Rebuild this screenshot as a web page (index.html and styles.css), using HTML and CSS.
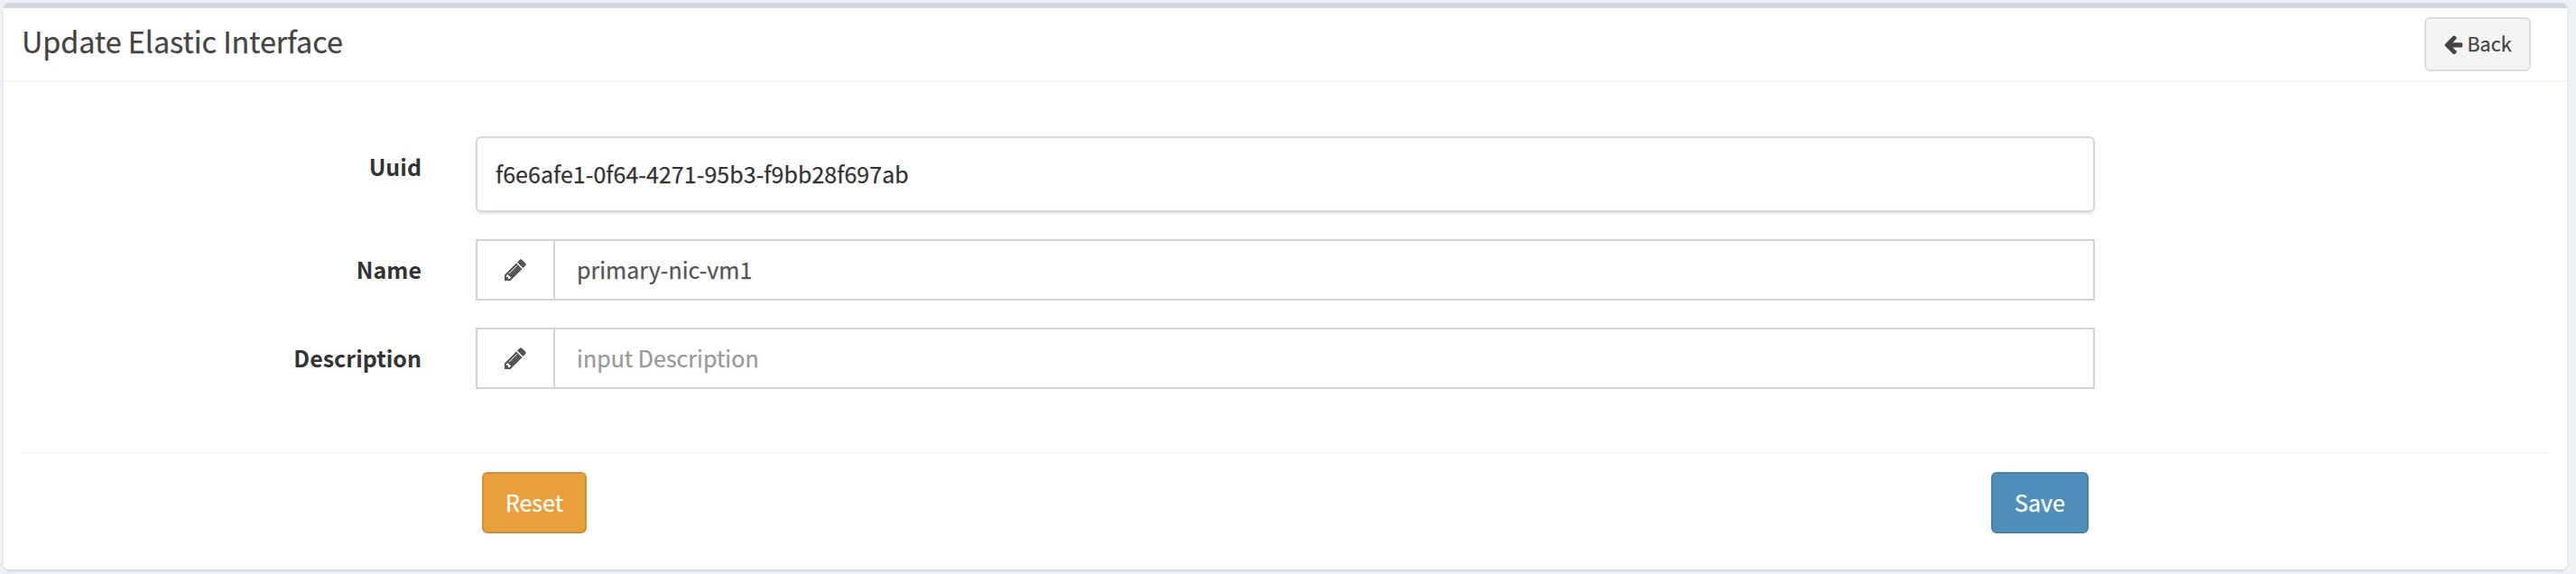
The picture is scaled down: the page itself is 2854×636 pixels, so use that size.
FILE: index.html
```html
<!DOCTYPE html>
<html lang="en">
<head>
<meta charset="utf-8">
<title>Update Elastic Interface</title>
<link rel="stylesheet" href="styles.css">
</head>
<body>
<svg class="sprite" aria-hidden="true">
  <symbol id="pencil" viewBox="0 0 1792 1792"><path d="M491 1536l91-91-235-235-91 91v107h128v128h107zm523-928q0-22-22-22-10 0-17 7l-542 542q-7 7-7 17 0 22 22 22 10 0 17-7l542-542q7-7 7-17zm-54-192l416 416-832 832h-416v-416zm683 96q0 53-37 90l-166 166-416-416 166-165q36-38 90-38 53 0 91 38l235 234q37 39 37 91z"/></symbol>
</svg>
<main class="box">
  <header class="box-header">
    <h3 class="box-title">Update Elastic Interface</h3>
    <a class="btn btn-back"><svg class="icon-back" viewBox="0 0 1792 1792"><path d="M1664 896v128q0 53-32.5 90.5t-84.5 37.5h-704l293 294q38 36 38 90t-38 90l-75 76q-37 37-90 37-52 0-91-37l-651-652q-37-37-37-90 0-52 37-91l651-650q38-38 91-38 52 0 90 38l75 74q38 38 38 91t-38 91l-293 293h704q52 0 84.5 37.5t32.5 90.5z"/></svg><span>Back</span></a>
  </header>
  <form class="box-body">
    <div class="form-group">
      <label class="label label-top"><span class="t">Uuid</span></label>
      <div class="static"><span class="t uuid">f6e6afe1-0f64-4271-95b3-f9bb28f697ab</span></div>
    </div>
    <div class="form-group">
      <label class="label"><span class="t">Name</span></label>
      <div class="input-group">
        <span class="addon"><svg class="icon-pencil"><use href="#pencil"/></svg></span>
        <div class="field"><span class="t">primary-nic-vm1</span></div>
      </div>
    </div>
    <div class="form-group">
      <label class="label"><span class="t">Description</span></label>
      <div class="input-group">
        <span class="addon"><svg class="icon-pencil"><use href="#pencil"/></svg></span>
        <div class="field placeholder"><span class="t">input Description</span></div>
      </div>
    </div>
  </form>
  <footer class="box-footer">
    <a class="btn btn-reset"><span class="t">Reset</span></a>
    <a class="btn btn-save"><span class="t">Save</span></a>
  </footer>
</main>
</body>
</html>
```

FILE: styles.css
```css
* {
  box-sizing: border-box;
}

body {
  margin: 0;
  height: 636px;
  padding: 3px 10px 5px 4px;
  overflow: hidden;
  background: #ecf0f5;
  color: #333;
  font: 25px/40px "Noto Sans CJK SC", sans-serif;
  -webkit-text-stroke: 0.25px;
}

.sprite {
  display: none;
}

.box {
  height: 628px;
  display: flex;
  flex-direction: column;
  background: #fff;
  border-top: 6px solid #d2d6de;
  border-radius: 6px;
  box-shadow: 0 2px 2px rgba(0, 0, 0, 0.1);
}

.box-header {
  height: 82px;
  display: flex;
  align-items: center;
  justify-content: space-between;
  padding: 0 40px 0 20px;
  border-bottom: 2px solid #f4f4f4;
  color: #444;
}

.box-title {
  margin: 0;
  padding-bottom: 9px;
  font-size: 32.4px;
  font-weight: 400;
  letter-spacing: -0.06px;
}

.btn {
  display: flex;
  align-items: center;
  justify-content: center;
  height: 68px;
  border: 2px solid;
  border-radius: 6px;
  color: #fff;
  white-space: nowrap;
}

.btn-back {
  width: 118px;
  height: 60px;
  gap: 3px;
  padding-right: 1px;
  font-size: 21.5px;
  background: #f4f4f4;
  border-color: #ddd;
  color: #444;
}

.btn-back span {
  padding-bottom: 3px;
}

.icon-back {
  width: 24px;
  height: 24px;
  fill: #444;
}

.box-body {
  flex: 1;
  display: flex;
  flex-direction: column;
  gap: 30px;
  padding: 60px 20px 0;
}

.form-group {
  display: grid;
  grid-template-columns: 443px 1794px;
  column-gap: 60px;
}

.label {
  display: flex;
  align-items: center;
  justify-content: flex-end;
  font-weight: 700;
  -webkit-text-stroke: 0;
}

.label-top {
  height: 68px;
}

.t {
  padding-bottom: 2px;
}

.uuid {
  letter-spacing: 0.04px;
}

.static {
  height: 84px;
  display: flex;
  align-items: center;
  padding-left: 20px;
  border: 2px solid #d2d6de;
  border-radius: 6px;
  box-shadow: 0 2px 2px rgba(0, 0, 0, 0.1);
}

.input-group {
  height: 68px;
  display: flex;
  border: 2px solid #d2d3d8;
}

.addon {
  width: 86px;
  display: flex;
  align-items: center;
  justify-content: center;
  border-right: 2px solid #d2d3d8;
}

.icon-pencil {
  width: 28px;
  height: 28px;
  fill: #555;
}

.field {
  flex: 1;
  display: flex;
  align-items: center;
  padding-left: 24px;
  color: #555;
}

.placeholder {
  color: #999;
}

.box-footer {
  height: 130px;
  display: flex;
  align-items: flex-start;
  justify-content: space-between;
  margin: 0 20px;
  padding: 20px 510px 0;
  border-top: 2px solid #f4f4f4;
}

.btn-reset {
  width: 116px;
  background: #e99f3c;
  border-color: #cb9040;
}

.btn-save {
  width: 108px;
  background: #508fbc;
  border-color: #4a80a6;
}
```
